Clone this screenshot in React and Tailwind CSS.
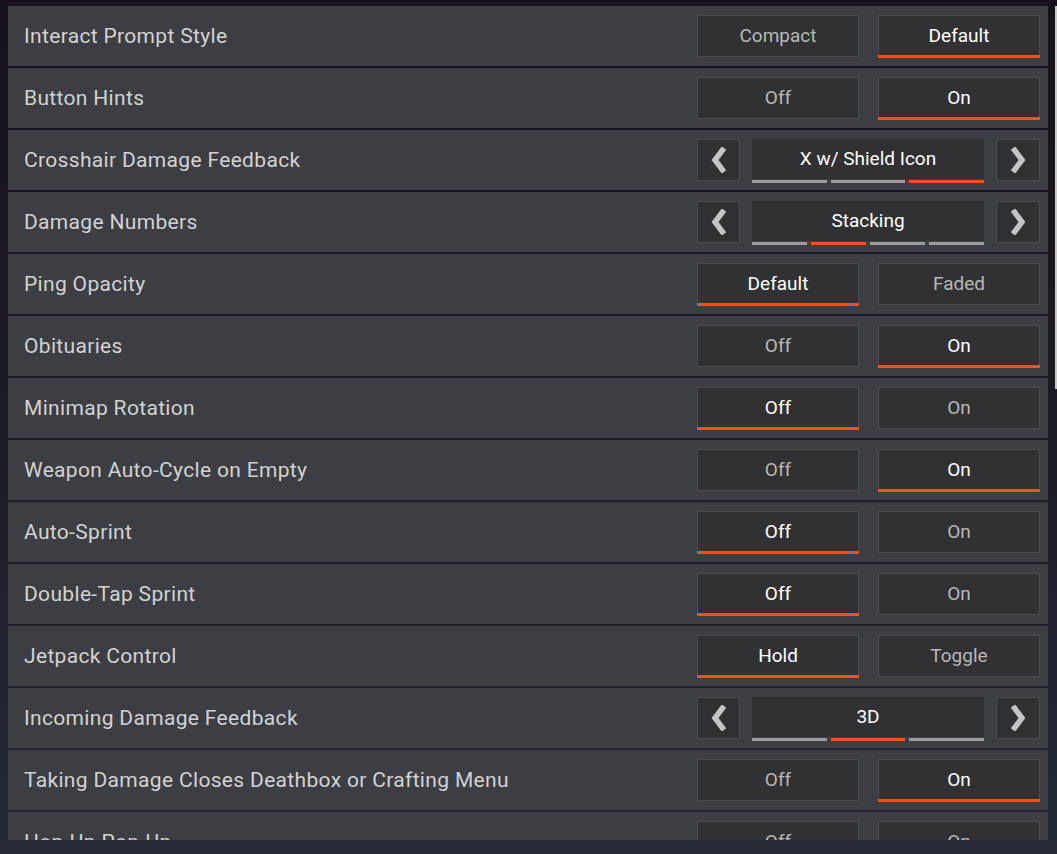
import React from 'react';

const rows = [
    { label: 'Interact Prompt Style', type: 'toggle', options: ['Compact', 'Default'], sel: 1 },
    { label: 'Button Hints', type: 'toggle', options: ['Off', 'On'], sel: 1 },
    { label: 'Crosshair Damage Feedback', type: 'cycle', value: 'X w/ Shield Icon', count: 3, sel: 2 },
    { label: 'Damage Numbers', type: 'cycle', value: 'Stacking', count: 4, sel: 1 },
    { label: 'Ping Opacity', type: 'toggle', options: ['Default', 'Faded'], sel: 0 },
    { label: 'Obituaries', type: 'toggle', options: ['Off', 'On'], sel: 1 },
    { label: 'Minimap Rotation', type: 'toggle', options: ['Off', 'On'], sel: 0 },
    { label: 'Weapon Auto-Cycle on Empty', type: 'toggle', options: ['Off', 'On'], sel: 1 },
    { label: 'Auto-Sprint', type: 'toggle', options: ['Off', 'On'], sel: 0 },
    { label: 'Double-Tap Sprint', type: 'toggle', options: ['Off', 'On'], sel: 0 },
    { label: 'Jetpack Control', type: 'toggle', options: ['Hold', 'Toggle'], sel: 0 },
    { label: 'Incoming Damage Feedback', type: 'cycle', value: '3D', count: 3, sel: 1 },
    { label: 'Taking Damage Closes Deathbox or Crafting Menu', type: 'toggle', options: ['Off', 'On'], sel: 1 },
    { label: 'Hop-Up Pop-Up', type: 'toggle', options: ['Off', 'On'], sel: -1 },
];

// thick chevron used in the cycle selectors
function Chevron({ dir }) {
    const d = dir === 'left' ? 'M15 1 L6 13 L15 25' : 'M5 1 L14 13 L5 25';
    return (
        <svg width="20" height="26" viewBox="0 0 20 26">
            <path d={d} fill="none" stroke="#c4c4c4" strokeWidth="5.5" strokeLinejoin="miter" />
        </svg>
    );
}

function ToggleButton({ text, active }) {
    return (
        <div className="relative w-[162px] h-[42px]">
            <div className={`h-full flex items-center justify-center bg-[#313133] border border-[#4b4c50] text-[19px] ${active ? 'text-white' : 'text-[#b8b8b8]'}`}>
                {text}
            </div>
            {active && <div className="absolute left-0 right-0 bottom-[-1px] h-[3px] bg-[#f74f1e]" />}
        </div>
    );
}

function Cycle({ value, count, sel }) {
    return (
        <div className="flex items-center gap-[12px]">
            <div className="w-[43px] h-[42px] flex items-center justify-center bg-[#313133] border border-[#4b4c50]">
                <Chevron dir="left" />
            </div>
            <div className="w-[232px] flex flex-col mt-[2px]">
                <div className="h-[40px] flex items-center justify-center bg-[#313133] text-white text-[19px]">{value}</div>
                <div className="flex gap-[4px] mt-[1px]">
                    {Array.from({ length: count }).map((_, i) => (
                        <div key={i} className={`flex-1 h-[3px] ${i === sel ? 'bg-[#f74f1e]' : 'bg-[#9b9b9b]'}`} />
                    ))}
                </div>
            </div>
            <div className="w-[44px] h-[42px] flex items-center justify-center bg-[#313133] border border-[#4b4c50]">
                <Chevron dir="right" />
            </div>
        </div>
    );
}

export default function App() {
    return (
        <div className="w-[1057px] h-[854px] overflow-hidden bg-[#1b1720] flex flex-col" style={{ fontFamily: 'Roboto, "Liberation Sans", sans-serif' }}>
            <div className="h-[840px] flex overflow-hidden bg-gradient-to-b from-[#17121b] via-[#1d1b24] to-[#242a38]">
                <div className="w-[1048px] pl-[8px] pt-[6px] flex flex-col gap-[2px] overflow-hidden">
                    {rows.map((row, i) => (
                        <div key={i} className="shrink-0 h-[60px] bg-[#3d3e43] flex items-center justify-between pl-[16px] pr-[8px]">
                            <span className="text-[21px] text-[#d2d2d2] tracking-[0.33px] pt-[2px]">{row.label}</span>
                            {row.type === 'toggle' ? (
                                <div className="flex gap-[19px]">
                                    {row.options.map((o, j) => (
                                        <ToggleButton key={j} text={o} active={j === row.sel} />
                                    ))}
                                </div>
                            ) : (
                                <Cycle value={row.value} count={row.count} sel={row.sel} />
                            )}
                        </div>
                    ))}
                </div>
                <div className="w-[9px] pt-[6px] flex justify-end">
                    <div className="w-[2px] h-[383px] bg-[#c9c9c9]" />
                </div>
            </div>
            <div className="h-[14px] bg-[#262b37]" />
        </div>
    );
}
